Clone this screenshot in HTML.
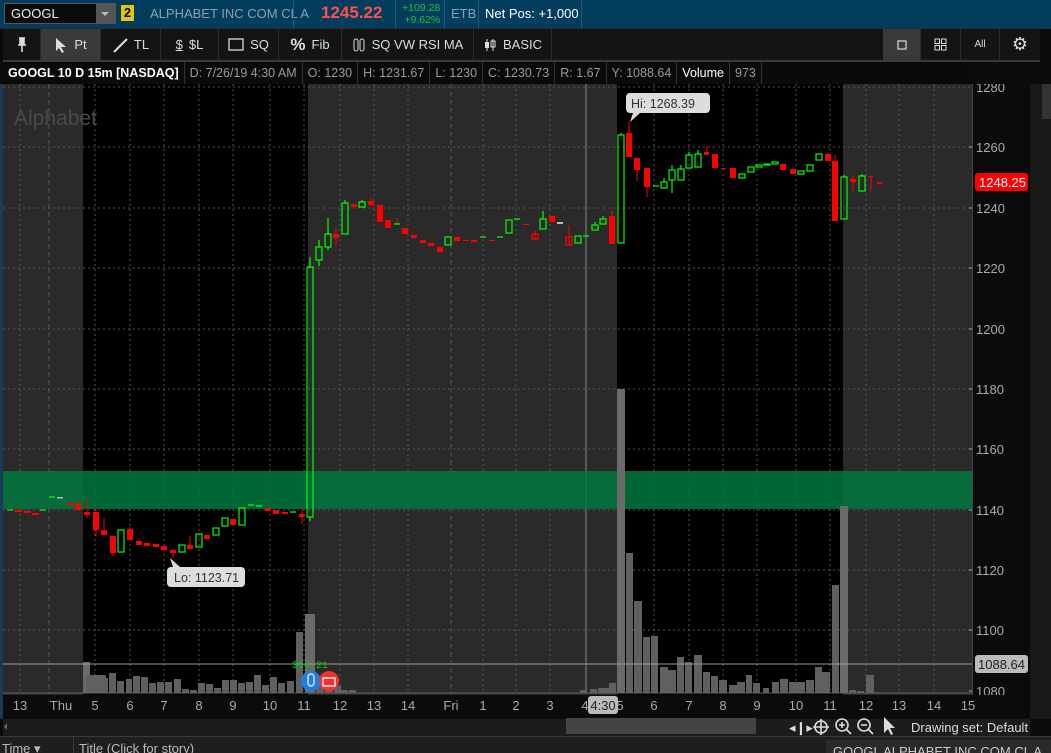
<!DOCTYPE html>
<html><head><meta charset="utf-8"><style>
*{margin:0;padding:0;box-sizing:border-box}
body{width:1051px;height:753px;overflow:hidden;background:#0b0b0b;font-family:"Liberation Sans",sans-serif;color:#ddd;position:relative}
.abs{position:absolute}
.top{left:0;top:0;width:1051px;height:28px;background:#033d5e}
.tb{left:3px;top:29px;width:1037px;height:31px;background:#141414}
.btn{position:absolute;top:0;height:31px;border-right:1px solid #2b2b2b;font-size:13px;color:#ddd;display:flex;align-items:center;justify-content:center;gap:6px}
.info{left:3px;top:62px;width:969px;height:22px;background:#0a0a0a;font-size:12.5px;color:#9a9a9a;display:flex;align-items:center}
.info span{padding:0 5px;border-right:1px solid #333;height:22px;line-height:22px}
</style></head><body>
<div class="abs top">
 <div class="abs" style="left:4px;top:3px;width:112px;height:21px;background:#0c0c0c;border:1px solid #555;font-size:13px;color:#eee;line-height:19px;padding-left:6px">GOOGL</div>
 <div class="abs" style="left:96px;top:4px;width:19px;height:19px;background:#555"><div class="abs" style="left:5px;top:8px;border:4px solid transparent;border-top:4px solid #bbb"></div></div>
 <div class="abs" style="left:121px;top:5px;width:13px;height:16px;background:#e6c800;color:#000;font-size:13px;font-weight:bold;text-align:center;line-height:16px">2</div>
 <div class="abs" style="left:150px;top:6px;font-size:13px;color:#8aa1b3">ALPHABET INC COM CL A</div>
 <div class="abs" style="left:293px;top:0;width:1px;height:28px;background:#1d5a7d"></div>
 <div class="abs" style="left:321px;top:3px;font-size:17px;font-weight:bold;color:#ff4f4f">1245.22</div>
 <div class="abs" style="left:395px;top:0;width:1px;height:28px;background:#1d5a7d"></div>
 <div class="abs" style="left:402px;top:2px;font-size:10.5px;color:#1fbf3b;line-height:12px;text-align:right">+109.28<br>+9.62%</div>
 <div class="abs" style="top:0;width:1px;height:28px;background:#1d5a7d;left:444px"></div>
 <div class="abs" style="left:451px;top:6px;font-size:13px;color:#8aa1b3">ETB</div>
 <div class="abs" style="left:478px;top:0;width:1px;height:28px;background:#1d5a7d"></div>
 <div class="abs" style="left:485px;top:6px;font-size:13px;color:#fff">Net Pos: +1,000</div>
 <div class="abs" style="left:581px;top:0;width:1px;height:28px;background:#1d5a7d"></div>
</div>
<div class="abs" style="left:0;top:28px;width:1051px;height:1px;background:#2a2a2a"></div>
<div class="abs tb">
 <div class="btn" style="left:0;width:38px"><svg width="10" height="16"><path d="M2 1H8M3 1V8H7V1M1 8H9M5 8V15" stroke="#ddd" stroke-width="1.6" fill="#ddd"/></svg></div>
 <div class="btn" style="left:38px;width:60px;background:#3a3a3a"><svg width="14" height="16"><path d="M2 1 L2 14 L5 11 L8 16 L10 15 L7 10 L12 10 Z" fill="#ddd"/></svg>Pt</div>
 <div class="btn" style="left:98px;width:60px"><svg width="16" height="16"><path d="M2 15 L15 2" stroke="#ddd" stroke-width="2"/></svg>TL</div>
 <div class="btn" style="left:158px;width:58px"><span style="text-decoration:underline">$</span>$L</div>
 <div class="btn" style="left:216px;width:60px"><svg width="16" height="13"><rect x="1" y="1" width="14" height="11" fill="none" stroke="#ddd" stroke-width="1.3"/></svg>SQ</div>
 <div class="btn" style="left:276px;width:63px"><b style="font-size:17px">%</b>Fib</div>
 <div class="btn" style="left:339px;width:132px"><svg width="14" height="16"><rect x="2" y="2" width="4" height="12" rx="2" fill="none" stroke="#ddd"/><rect x="8" y="2" width="4" height="12" rx="2" fill="none" stroke="#ddd"/></svg>SQ VW RSI MA</div>
 <div class="btn" style="left:471px;width:78px"><svg width="14" height="16"><path d="M4 2V14M10 2V14" stroke="#ddd"/><rect x="2" y="5" width="4" height="6" fill="#ddd"/><rect x="8" y="4" width="4" height="6" fill="none" stroke="#ddd"/></svg>BASIC</div>
 <div class="btn" style="left:880px;width:38px;background:#3a3a3a"><svg width="10" height="10"><rect x="1" y="1" width="8" height="8" fill="none" stroke="#ddd" stroke-width="1.2"/></svg></div>
 <div class="btn" style="left:918px;width:40px"><svg width="13" height="13"><rect x="1" y="1" width="4.5" height="4.5" fill="none" stroke="#ddd"/><rect x="7.5" y="1" width="4.5" height="4.5" fill="none" stroke="#ddd"/><rect x="1" y="7.5" width="4.5" height="4.5" fill="none" stroke="#ddd"/><rect x="7.5" y="7.5" width="4.5" height="4.5" fill="none" stroke="#ddd"/></svg></div>
 <div class="btn" style="left:958px;width:39px;font-size:10px">All</div>
 <div class="btn" style="left:997px;width:40px;font-size:18px;border:none">&#x2699;</div>
</div>
<div class="abs" style="left:3px;top:60px;width:1037px;height:2px;background:#3a3a3a"></div>
<div class="abs info">
 <span style="color:#fff;font-weight:bold">GOOGL 10 D 15m [NASDAQ]</span><span>D: 7/26/19 4:30 AM</span><span>O: 1230</span><span>H: 1231.67</span><span>L: 1230</span><span>C: 1230.73</span><span>R: 1.67</span><span>Y: 1088.64</span><span style="color:#fff">Volume</span><span>973</span>
</div>
<svg class="abs" style="left:0;top:84px" width="1051" height="669" viewBox="0 84 1051 669">
<rect x="0" y="84" width="3" height="635" fill="#1a3a5a"/>
<rect x="3" y="84" width="80" height="611" fill="#2a2a2a"/>
<rect x="83" y="84" width="225" height="611" fill="#000"/>
<rect x="308" y="84" width="309" height="611" fill="#2a2a2a"/>
<rect x="617" y="84" width="226" height="611" fill="#000"/>
<rect x="843" y="84" width="129" height="611" fill="#2a2a2a"/>
<text x="14" y="125" font-size="21" fill="#4a4a4a" font-family="Liberation Sans">Alphabet</text>
<g stroke="#555" stroke-dasharray="2,3" stroke-width="1">
<path d="M3 87H972M3 147H972M3 208H972M3 268H972M3 329H972M3 389H972M3 449H972M3 510H972M3 570H972M3 630H972"/>
<path d="M20 84V693M95 84V693M130 84V693M164 84V693M199 84V693M233 84V693M270 84V693M304 84V693M340 84V693M374 84V693M408 84V693M483 84V693M516 84V693M550 84V693M654 84V693M689 84V693M723 84V693M757 84V693M796 84V693M830 84V693M866 84V693M899 84V693M934 84V693"/>
</g>
<path d="M49 84V693M451 84V693" stroke="#555" stroke-dasharray="5,3"/>
<path d="M586 84V693" stroke="#888"/>
<rect x="3" y="471" width="969" height="38" fill="rgb(0,120,62)" opacity="0.85"/>
<g fill="#606060">
<rect x="83" y="662" width="7" height="31" fill="#6a6a6a"/>
<rect x="86" y="675" width="20" height="18"/><rect x="101" y="678" width="7" height="15"/><rect x="109" y="673" width="7" height="20"/><rect x="117" y="681" width="7" height="12"/><rect x="126" y="679" width="6" height="14"/><rect x="133" y="676" width="7" height="17"/><rect x="141" y="677" width="7" height="16"/><rect x="149" y="683" width="7" height="10"/><rect x="157" y="682" width="7" height="11"/><rect x="165" y="682" width="7" height="11"/><rect x="174" y="679" width="7" height="14"/><rect x="182" y="689" width="7" height="4"/><rect x="190" y="690" width="7" height="3"/><rect x="198" y="683" width="7" height="10"/><rect x="206" y="684" width="7" height="9"/><rect x="214" y="688" width="7" height="5"/><rect x="222" y="680" width="7" height="13"/><rect x="230" y="680" width="7" height="13"/><rect x="238" y="683" width="7" height="10"/><rect x="246" y="682" width="7" height="11"/><rect x="254" y="675" width="7" height="18"/><rect x="262" y="685" width="7" height="8"/><rect x="270" y="677" width="7" height="16"/><rect x="278" y="683" width="7" height="10"/><rect x="287" y="681" width="7" height="12"/><rect x="296" y="632" width="7" height="61"/>
<rect x="305" y="614" width="10" height="79" fill="#6a6a6a"/><rect x="316" y="677" width="8" height="16"/><rect x="325" y="680" width="8" height="13"/><rect x="334" y="686" width="7" height="7"/><rect x="341" y="690" width="7" height="3"/><rect x="349" y="690" width="7" height="3"/>
<rect x="580" y="690" width="7" height="3"/><rect x="590" y="689" width="7" height="4"/><rect x="598" y="688" width="14" height="5"/><rect x="609" y="683" width="7" height="10"/>
<rect x="617" y="389" width="8" height="304" fill="#6a6a6a"/><rect x="626" y="553" width="7" height="140"/><rect x="634" y="601" width="8" height="92"/><rect x="643" y="637" width="7" height="56"/><rect x="651" y="636" width="7" height="57"/><rect x="660" y="667" width="8" height="26"/><rect x="668" y="670" width="8" height="23"/><rect x="677" y="657" width="7" height="36"/><rect x="685" y="662" width="7" height="31"/><rect x="694" y="655" width="8" height="38"/><rect x="703" y="672" width="7" height="21"/><rect x="711" y="676" width="7" height="17"/><rect x="719" y="680" width="8" height="13"/><rect x="729" y="685" width="8" height="8"/><rect x="737" y="682" width="8" height="11"/><rect x="746" y="675" width="6" height="18"/><rect x="753" y="683" width="7" height="10"/><rect x="763" y="688" width="6" height="5"/><rect x="772" y="682" width="7" height="11"/><rect x="780" y="679" width="8" height="14"/><rect x="789" y="682" width="16" height="11"/><rect x="806" y="680" width="8" height="13"/><rect x="815" y="667" width="7" height="26"/><rect x="822" y="672" width="8" height="21"/><rect x="832" y="585" width="7" height="108"/><rect x="840" y="506" width="8" height="187" fill="#6a6a6a"/><rect x="849" y="690" width="7" height="3"/><rect x="857" y="691" width="7" height="2"/><rect x="866" y="675" width="8" height="18"/>
</g>
<path d="M3 664H972" stroke="#999"/>
<path d="M3 693H972" stroke="#666"/>
<g stroke="#f00" stroke-width="1">
<path d="M87 498V518M96 508V536M104 518V535M113 536V556M130 527V540M173 550V558M190 536V549M302 507V524M336 228V246M371 198V207M397 218V224M535 230V240M569 225V245M612 210V244M629 121V157M637 158V181M647 168V197M707 146V155M835 155V221M853 176V191M871 176V191"/>
</g>
<g fill="#f00">
<rect x="15" y="510" width="7" height="2"/><rect x="24" y="511" width="7" height="2"/><rect x="32" y="513" width="7" height="2"/><rect x="67" y="503" width="6" height="2"/><rect x="75" y="503" width="6" height="7"/>
<rect x="84" y="512" width="6" height="3"/><rect x="93" y="512" width="6" height="18"/><rect x="101" y="530" width="6" height="5"/><rect x="110" y="536" width="6" height="17"/><rect x="127" y="529" width="6" height="11"/><rect x="136" y="541" width="6" height="4"/><rect x="144" y="543" width="6" height="3"/><rect x="153" y="544" width="6" height="3"/><rect x="161" y="546" width="6" height="4"/><rect x="170" y="550" width="6" height="3"/><rect x="187" y="545" width="6" height="4"/><rect x="204" y="535" width="6" height="4"/><rect x="230" y="519" width="6" height="6"/><rect x="265" y="508" width="6" height="3"/><rect x="273" y="510" width="6" height="4"/><rect x="282" y="512" width="6" height="2"/><rect x="299" y="514" width="6" height="3"/>
<rect x="333" y="234" width="6" height="4"/><rect x="351" y="204" width="6" height="3"/><rect x="368" y="201" width="6" height="4"/><rect x="377" y="205" width="6" height="17"/><rect x="385" y="220" width="6" height="8"/><rect x="402" y="228" width="6" height="6"/><rect x="411" y="235" width="6" height="3"/><rect x="420" y="240" width="6" height="3"/><rect x="428" y="243" width="6" height="3"/><rect x="437" y="247" width="6" height="5"/><rect x="454" y="237" width="6" height="4"/><rect x="463" y="240" width="6" height="1"/><rect x="471" y="240" width="6" height="2"/><rect x="489" y="240" width="6" height="1"/><rect x="523" y="224" width="6" height="1"/><rect x="549" y="216" width="6" height="6"/><rect x="609" y="216" width="6" height="28"/>
<rect x="626" y="133" width="6" height="24"/><rect x="634" y="158" width="6" height="12"/><rect x="644" y="168" width="6" height="19"/><rect x="704" y="152" width="5" height="3"/><rect x="712" y="154" width="6" height="14"/><rect x="721" y="168" width="5" height="1"/><rect x="730" y="168" width="6" height="10"/><rect x="780" y="164" width="6" height="6"/><rect x="790" y="169" width="6" height="5"/><rect x="825" y="154" width="6" height="7"/><rect x="832" y="161" width="6" height="60"/><rect x="850" y="179" width="6" height="3"/><rect x="868" y="176" width="5" height="1"/><rect x="877" y="182" width="5" height="2"/>
</g>
<g fill="none" stroke="#f00" stroke-width="1.3"><rect x="532" y="234" width="6" height="5"/><rect x="566" y="237" width="6" height="8"/></g>
<g stroke="#0f0" stroke-width="1.2" fill="none">
<path d="M7 510H13M40 510H46M49 497H55M248 505H254M256 506H262M290 512H296M394 224H400M480 237H486M497 237H503M514 219H520M583 236H589M653 186H659"/>
<path d="M310 257V267M310 517V521M319 240V247M319 260V266M328 218V234M328 247V250M345 200V203M362 200V202M543 211V219M595 222V225M603 216V219M621 133V135M664 178V182M672 165V170M672 180V193M681 165V169M689 152V155M698 150V154M844 175V177M862 174V176"/>
<rect x="118" y="530" width="6" height="22"/><rect x="179" y="545" width="6" height="7"/><rect x="196" y="534" width="6" height="13"/><rect x="213" y="528" width="6" height="7"/><rect x="222" y="518" width="6" height="8"/><rect x="239" y="508" width="6" height="17"/>
<rect x="307" y="267" width="6" height="250"/><rect x="316" y="247" width="6" height="13"/><rect x="325" y="234" width="6" height="13"/><rect x="342" y="203" width="6" height="31"/><rect x="359" y="202" width="6" height="5"/><rect x="445" y="237" width="6" height="8"/><rect x="506" y="220" width="6" height="13"/><rect x="540" y="219" width="6" height="10"/><rect x="575" y="236" width="6" height="7"/><rect x="592" y="225" width="6" height="5"/><rect x="600" y="219" width="6" height="5"/><rect x="618" y="135" width="6" height="108"/>
<rect x="661" y="182" width="6" height="6"/><rect x="669" y="170" width="6" height="10"/><rect x="678" y="169" width="6" height="11"/><rect x="686" y="155" width="6" height="13"/><rect x="695" y="154" width="6" height="13"/><rect x="739" y="174" width="6" height="4"/><rect x="748" y="167" width="6" height="5"/><rect x="756" y="165" width="6" height="2"/><rect x="764" y="164" width="6" height="1"/><rect x="772" y="162" width="6" height="2"/><rect x="798" y="171" width="6" height="3"/><rect x="807" y="165" width="6" height="6"/><rect x="816" y="154" width="6" height="6"/><rect x="841" y="177" width="6" height="42"/><rect x="859" y="176" width="6" height="15"/>
</g>
<rect x="57" y="497" width="6" height="1.5" fill="#bbb"/><rect x="557" y="222" width="6" height="2" fill="#bbb"/>
<rect x="167" y="567" width="78" height="20" rx="4" fill="#ddd"/><path d="M173 567L170 558L180 567Z" fill="#ddd"/>
<text x="174" y="582" font-size="12.5" fill="#333">Lo: 1123.71</text>
<rect x="626" y="93" width="84" height="20" rx="4" fill="#ddd"/><path d="M633 113L630 122L640 113Z" fill="#ddd"/>
<text x="631" y="108" font-size="12.5" fill="#333">Hi: 1268.39</text>
<text x="292" y="668" font-size="10" fill="#0c0" font-family="Liberation Mono">$14.21</text>
<circle cx="311" cy="681" r="10" fill="#1f7fe0"/><rect x="308" y="674" width="6" height="12" rx="3" fill="none" stroke="#dde" stroke-width="1.5"/>
<circle cx="329" cy="681" r="10" fill="#e33"/><rect x="323" y="678" width="12" height="8" fill="none" stroke="#fdd" stroke-width="1.5"/>
<rect x="972" y="84" width="1" height="611" fill="#444"/>
<rect x="1030" y="84" width="21" height="635" fill="#181818"/><rect x="1042" y="84" width="9" height="35" fill="#333"/>
<g font-size="13" fill="#aaa">
<text x="976" y="92">1280</text><text x="976" y="152">1260</text><text x="976" y="213">1240</text><text x="976" y="273">1220</text><text x="976" y="334">1200</text><text x="976" y="394">1180</text><text x="976" y="454">1160</text><text x="976" y="515">1140</text><text x="976" y="575">1120</text><text x="976" y="635">1100</text><text x="976" y="696">1080</text>
</g>
<path d="M969 147H972M969 208H972M969 268H972M969 329H972M969 389H972M969 449H972M969 510H972M969 570H972M969 630H972M969 691H972" stroke="#aaa"/>
<rect x="975" y="173" width="53" height="18" rx="3" fill="#f00"/><text x="979" y="187" font-size="13" fill="#fff">1248.25</text>
<rect x="975" y="655" width="53" height="18" rx="3" fill="#bbb"/><text x="978" y="669" font-size="13" fill="#222">1088.64</text>
<path d="M978 66L985 73M985 69V73H981M983 78Q988 68 993 76M995 79L990 74M990 78V74H994" stroke="#ccc" stroke-width="1.5" fill="none"/>
<rect x="3" y="695" width="1027" height="24" fill="#0b0b0b"/>
<g font-size="13" fill="#aaa" text-anchor="middle">
<text x="20" y="710">13</text><text x="61" y="710">Thu</text><text x="95" y="710">5</text><text x="130" y="710">6</text><text x="164" y="710">7</text><text x="199" y="710">8</text><text x="233" y="710">9</text><text x="270" y="710">10</text><text x="304" y="710">11</text><text x="340" y="710">12</text><text x="374" y="710">13</text><text x="408" y="710">14</text><text x="451" y="710">Fri</text><text x="483" y="710">1</text><text x="516" y="710">2</text><text x="550" y="710">3</text><text x="585" y="710">4</text><text x="620" y="710">5</text><text x="654" y="710">6</text><text x="689" y="710">7</text><text x="723" y="710">8</text><text x="757" y="710">9</text><text x="796" y="710">10</text><text x="830" y="710">11</text><text x="866" y="710">12</text><text x="899" y="710">13</text><text x="934" y="710">14</text><text x="968" y="710">15</text>
</g>
<rect x="588" y="696" width="30" height="18" rx="3" fill="#bbb"/><text x="603" y="710" font-size="13" fill="#222" text-anchor="middle">4:30</text>
<rect x="3" y="719" width="1027" height="17" fill="#1c1c1c"/>
<rect x="566" y="718" width="190" height="16" fill="#444"/>
<path d="M7 723V730L4 726.5Z" fill="#666"/>
<text x="801" y="732" font-size="13" fill="#ddd" text-anchor="middle">&#x25C2;&#x2759;&#x25B8;</text>
<g stroke="#ddd" stroke-width="1.6" fill="none"><circle cx="821" cy="727" r="6"/><path d="M821 719V735M813 727H829"/><circle cx="842" cy="725" r="6"/><path d="M846 729L851 734M839 725H845M842 722V728"/><circle cx="864" cy="725" r="6"/><path d="M868 729L873 734M861 725H867"/></g>
<path d="M884 717V733L888 729L891 735L893 734L890 728H895Z" fill="#ddd"/>
<text x="911" y="732" font-size="13" fill="#ddd">Drawing set: Default</text>
<rect x="0" y="737" width="1051" height="16" fill="#1e1e1e"/><rect x="0" y="736" width="1051" height="1" fill="#3a3a3a"/>
<rect x="73" y="737" width="1" height="16" fill="#3a3a3a"/>
<text x="2" y="753" font-size="13" fill="#bbb">Time ▾</text><text x="79" y="753" font-size="13" fill="#bbb">Title (Click for story)</text>
<rect x="826" y="740" width="225" height="13" fill="#2a2a2a"/><text x="833" y="756" font-size="13" fill="#ccc">GOOGL  ALPHABET INC COM CL A</text>
</svg>
</body></html>
